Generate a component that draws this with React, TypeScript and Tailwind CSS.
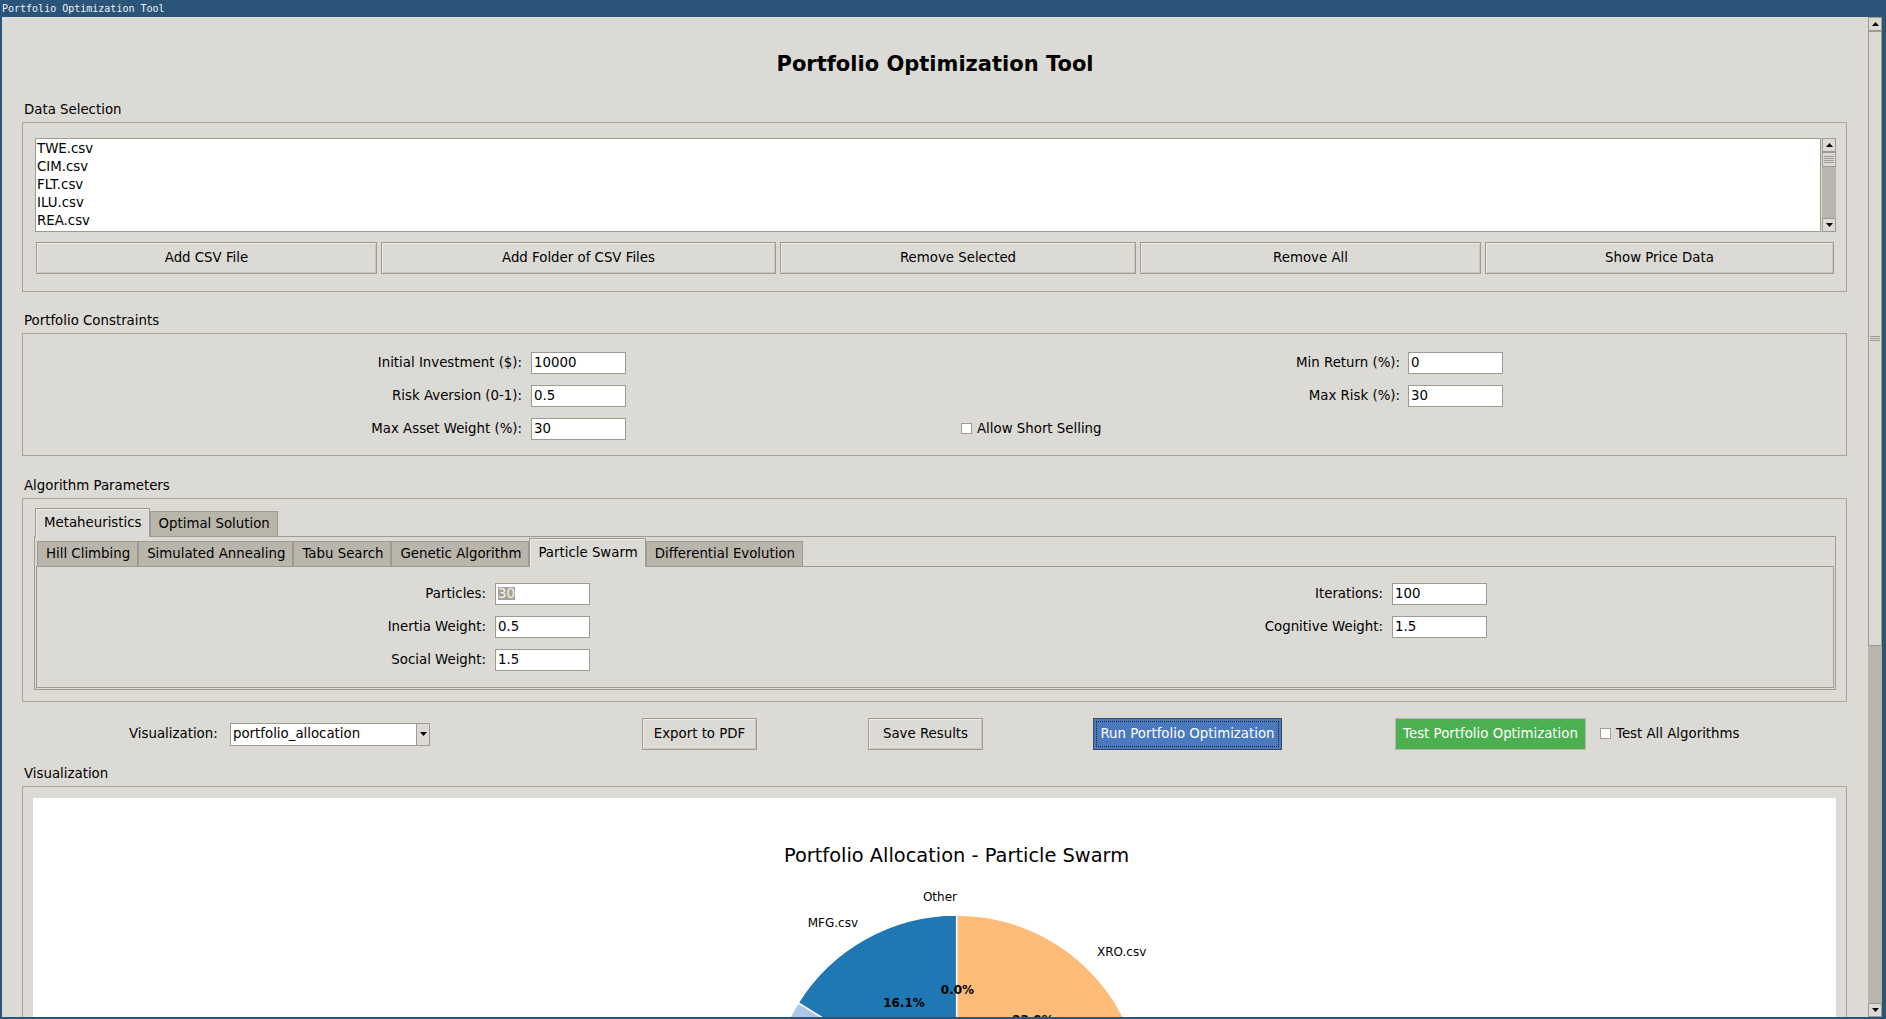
import React from 'react'

const files = ['TWE.csv', 'CIM.csv', 'FLT.csv', 'ILU.csv', 'REA.csv']

const Entry = ({ value, selected }: { value: string; selected?: boolean }) => (
  <div className="h-[22px] w-[95px] border border-[#9e9a91] bg-white pl-[2px] flex items-center leading-none">
    {selected ? <span className="bg-[#a7a39b] text-[#f4f2ee]">{value}</span> : <span>{value}</span>}
  </div>
)

const Check = ({ label }: { label: string }) => (
  <div className="flex items-center gap-[5px]">
    <div className="w-[11px] h-[11px] border border-[#9e9a91] bg-white" />
    <span>{label}</span>
  </div>
)

const Btn = ({ children, className }: { children: React.ReactNode; className?: string }) => (
  <div
    className={
      'h-[32px] flex items-center justify-center border border-[#9e9a91] bg-[#dcdad5] shadow-[inset_1px_1px_0_#eeebe7,inset_-1px_-1px_0_#c9c5bd] ' +
      (className || '')
    }
  >
    {children}
  </div>
)

const Arrow = ({ up }: { up?: boolean }) => (
  <div className="h-[14px] w-[14px] shrink-0 border border-[#9e9a91] bg-[#dcdad5] flex items-center justify-center">
    <svg width="7" height="4" viewBox="0 0 7 4">
      <path d={up ? 'M0 4 L3.5 0 L7 4 Z' : 'M0 0 L3.5 4 L7 0 Z'} fill="#000" />
    </svg>
  </div>
)

const Grip = ({ lines }: { lines: number }) => (
  <div className="flex flex-col gap-[1px] w-[10px]">
    {Array.from({ length: lines }).map((_, i) => (
      <div key={i} className="h-[1px] bg-[#9e9a91]" />
    ))}
  </div>
)

const Tab = ({ label, active }: { label: string; active?: boolean }) =>
  active ? (
    <div className="relative z-10 -mb-px h-[29px] pl-[8px] pr-[7px] flex items-center border border-b-0 border-[#9e9a91] bg-[#dcdad5] shadow-[inset_1px_1px_0_#eeebe7]">
      {label}
    </div>
  ) : (
    <div className="h-[25px] pl-[8px] pr-[7px] flex items-center border border-b-0 border-[#9e9a91] bg-[#bab5ab]">{label}</div>
  )

const SectionLabel = ({ text, className }: { text: string; className: string }) => (
  <div className={'h-[18px] leading-[21px] pl-[22px] ' + className}>{text}</div>
)

function pt(cx: number, cy: number, r: number, a: number) {
  const rad = (a * Math.PI) / 180
  return [cx + r * Math.cos(rad), cy - r * Math.sin(rad)]
}

function wedge(cx: number, cy: number, r: number, a0: number, a1: number) {
  const [x0, y0] = pt(cx, cy, r, a0)
  const [x1, y1] = pt(cx, cy, r, a1)
  const large = a1 - a0 > 180 ? 1 : 0
  return `M${cx} ${cy} L${x0} ${y0} A${r} ${r} 0 ${large} 0 ${x1} ${y1} Z`
}

const slices = [
  { pct: 16.1, color: '#1f77b4' },
  { pct: 30.5, color: '#aec7e8' },
  { pct: 29.5, color: '#ff7f0e' },
  { pct: 23.9, color: '#ffbb78' },
]

const PieChart = () => {
  const cx = 923.7
  const cy = 304
  const r = 187
  let a = 90
  return (
    <svg width="1803" height="420" className="block">
      <text x="923.5" y="64" textAnchor="middle" fontSize="19.4" fontFamily="DejaVu Sans" fill="#000">
        Portfolio Allocation - Particle Swarm
      </text>
      {slices.map((s, i) => {
        const a0 = a
        const a1 = a + s.pct * 3.6
        a = a1
        return <path key={i} d={wedge(cx, cy, r, a0, a1)} fill={s.color} stroke="#fff" strokeWidth="1.5" strokeLinejoin="round" />
      })}
      <g fontFamily="DejaVu Sans" fontSize="12" fill="#000">
        <text x="924" y="99" textAnchor="end" dominantBaseline="central">Other</text>
        <text x="825" y="124.7" textAnchor="end" dominantBaseline="central">MFG.csv</text>
        <text x="1064" y="153.7" textAnchor="start" dominantBaseline="central">XRO.csv</text>
      </g>
      <g fontFamily="DejaVu Sans" fontSize="12" fontWeight="bold" fill="#000">
        <text x="924.5" y="192" textAnchor="middle" dominantBaseline="central">0.0%</text>
        <text x="871" y="204.7" textAnchor="middle" dominantBaseline="central">16.1%</text>
        <text x="1000" y="222" textAnchor="middle" dominantBaseline="central">23.9%</text>
      </g>
    </svg>
  )
}

export default function App() {
  return (
    <div className="w-[1886px] h-[1019px] overflow-hidden flex flex-col bg-[#2a5579] font-['DejaVu_Sans',sans-serif] text-[13.33px] text-black">
      <div className="h-[17px] shrink-0 pl-[2px] leading-[17px] text-[10px] text-[#eef2f6] font-['DejaVu_Sans_Mono',monospace]">
        Portfolio Optimization Tool
      </div>
      <div className="flex-1 flex min-h-0">
        <div className="w-[2px] shrink-0" />
        <div className="flex-1 min-w-0 bg-[#dcdad5] overflow-hidden">
          <div className="mt-[32px] h-[29px] leading-[30px] text-center text-[21px] font-bold">Portfolio Optimization Tool</div>

          <SectionLabel text="Data Selection" className="mt-[21px]" />
          <div className="mt-[5px] ml-[20px] mr-[21px] h-[170px] border border-[#a8a49c] pt-[15px] pl-[12px] pr-[10px]">
            <div className="flex h-[94px]">
              <div className="flex-1 border border-[#9e9a91] bg-white pl-[1px] pt-[1px] leading-[18px] overflow-hidden">
                {files.map((f) => (
                  <div key={f}>{f}</div>
                ))}
              </div>
              <div className="w-[14px] ml-[1px] flex flex-col">
                <Arrow up />
                <div className="h-[15px] border border-[#9e9a91] bg-[#dcdad5] flex items-center justify-center">
                  <Grip lines={4} />
                </div>
                <div className="flex-1 bg-[#bab5ab]" />
                <Arrow />
              </div>
            </div>
            <div className="mt-[10px] flex gap-[4px] pl-[1px]">
              <Btn className="w-[341px]">Add CSV File</Btn>
              <Btn className="w-[395px]">Add Folder of CSV Files</Btn>
              <Btn className="w-[356px]">Remove Selected</Btn>
              <Btn className="w-[341px]">Remove All</Btn>
              <Btn className="w-[349px]">Show Price Data</Btn>
            </div>
          </div>

          <SectionLabel text="Portfolio Constraints" className="mt-[18px]" />
          <div className="mt-[5px] ml-[20px] mr-[21px] h-[123px] border border-[#a8a49c] pt-[12px]">
            <div className="grid grid-cols-[508px_95px_782px_95px_1fr] auto-rows-[33px] items-center">
              <div className="text-right pr-[9px]">Initial Investment ($):</div>
              <Entry value="10000" />
              <div className="text-right pr-[8px]">Min Return (%):</div>
              <Entry value="0" />
              <div />
              <div className="text-right pr-[9px]">Risk Aversion (0-1):</div>
              <Entry value="0.5" />
              <div className="text-right pr-[8px]">Max Risk (%):</div>
              <Entry value="30" />
              <div />
              <div className="text-right pr-[9px]">Max Asset Weight (%):</div>
              <Entry value="30" />
              <div className="pl-[335px]">
                <Check label="Allow Short Selling" />
              </div>
              <div />
              <div />
            </div>
          </div>

          <SectionLabel text="Algorithm Parameters" className="mt-[19px]" />
          <div className="mt-[5px] ml-[20px] mr-[21px] h-[204px] border border-[#a8a49c] pt-[10px] pl-[11px] pr-[10px]">
            <div className="flex items-end h-[27px] pl-[1px]">
              <Tab label="Metaheuristics" active />
              <Tab label="Optimal Solution" />
            </div>
            <div className="h-[154px] border border-[#9e9a91] pt-[1px] px-[1px]">
              <div className="flex items-end h-[28px] pl-[1px]">
                <Tab label="Hill Climbing" />
                <Tab label="Simulated Annealing" />
                <Tab label="Tabu Search" />
                <Tab label="Genetic Algorithm" />
                <Tab label="Particle Swarm" active />
                <Tab label="Differential Evolution" />
              </div>
              <div className="h-[122px] border border-[#9e9a91] pt-[10px]">
                <div className="grid grid-cols-[458px_95px_802px_95px_1fr] auto-rows-[33px] items-center">
                  <div className="text-right pr-[9px]">Particles:</div>
                  <Entry value="30" selected />
                  <div className="text-right pr-[9px]">Iterations:</div>
                  <Entry value="100" />
                  <div />
                  <div className="text-right pr-[9px]">Inertia Weight:</div>
                  <Entry value="0.5" />
                  <div className="text-right pr-[9px]">Cognitive Weight:</div>
                  <Entry value="1.5" />
                  <div />
                  <div className="text-right pr-[9px]">Social Weight:</div>
                  <Entry value="1.5" />
                  <div />
                  <div />
                  <div />
                </div>
              </div>
            </div>
          </div>

          <div className="mt-[16px] h-[32px] flex items-center">
            <div className="ml-[127px] w-[89px]">Visualization:</div>
            <div className="ml-[12px] w-[200px] h-[23px] flex border border-[#9e9a91] bg-white">
              <div className="flex-1 pl-[2px] flex items-center leading-none">portfolio_allocation</div>
              <div className="w-[13px] border-l border-[#9e9a91] bg-[#dcdad5] flex items-center justify-center">
                <svg width="7" height="4" viewBox="0 0 7 4">
                  <path d="M0 0 L3.5 4 L7 0 Z" fill="#000" />
                </svg>
              </div>
            </div>
            <Btn className="ml-[212px] w-[115px]">Export to PDF</Btn>
            <Btn className="ml-[111px] w-[115px]">Save Results</Btn>
            <div className="ml-[110px] w-[189px] h-[32px] border border-[#3a4a60] bg-[#4a7abd] p-[2px]">
              <div className="h-full border border-dotted border-[#1a2330] flex items-center justify-center text-white">
                Run Portfolio Optimization
              </div>
            </div>
            <div className="ml-[113px] w-[191px] h-[32px] border border-[#b9b6b0] bg-[#4caf50] flex items-center justify-center text-white">
              Test Portfolio Optimization
            </div>
            <div className="ml-[14px]">
              <Check label="Test All Algorithms" />
            </div>
          </div>

          <SectionLabel text="Visualization" className="mt-[13px]" />
          <div className="mt-[5px] ml-[20px] mr-[21px] h-[300px] border border-[#a8a49c] pt-[11px] px-[10px]">
            <div className="h-[280px] bg-white overflow-hidden">
              <PieChart />
            </div>
          </div>
        </div>
        <div className="w-[14px] shrink-0 flex flex-col bg-[#dcdad5]">
          <Arrow up />
          <div className="h-[615px] border border-[#9e9a91] bg-[#dcdad5] flex items-center justify-center">
            <Grip lines={3} />
          </div>
          <div className="flex-1 bg-[#bab5ab]" />
          <Arrow />
        </div>
        <div className="w-[4px] shrink-0" />
      </div>
      <div className="h-[2px] shrink-0" />
    </div>
  )
}
